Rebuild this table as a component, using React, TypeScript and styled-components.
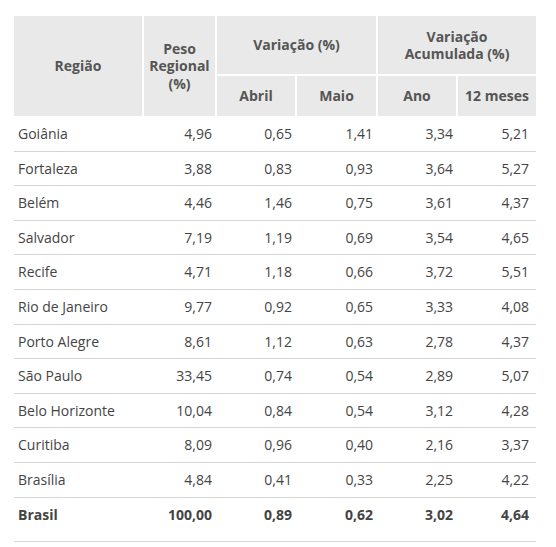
import React from 'react';
import styled, { createGlobalStyle } from 'styled-components';

interface RegionRow {
  name: string;
  peso: string;
  abril: string;
  maio: string;
  ano: string;
  meses: string;
}

const rows: RegionRow[] = [
  { name: 'Goiânia', peso: '4,96', abril: '0,65', maio: '1,41', ano: '3,34', meses: '5,21' },
  { name: 'Fortaleza', peso: '3,88', abril: '0,83', maio: '0,93', ano: '3,64', meses: '5,27' },
  { name: 'Belém', peso: '4,46', abril: '1,46', maio: '0,75', ano: '3,61', meses: '4,37' },
  { name: 'Salvador', peso: '7,19', abril: '1,19', maio: '0,69', ano: '3,54', meses: '4,65' },
  { name: 'Recife', peso: '4,71', abril: '1,18', maio: '0,66', ano: '3,72', meses: '5,51' },
  { name: 'Rio de Janeiro', peso: '9,77', abril: '0,92', maio: '0,65', ano: '3,33', meses: '4,08' },
  { name: 'Porto Alegre', peso: '8,61', abril: '1,12', maio: '0,63', ano: '2,78', meses: '4,37' },
  { name: 'São Paulo', peso: '33,45', abril: '0,74', maio: '0,54', ano: '2,89', meses: '5,07' },
  { name: 'Belo Horizonte', peso: '10,04', abril: '0,84', maio: '0,54', ano: '3,12', meses: '4,28' },
  { name: 'Curitiba', peso: '8,09', abril: '0,96', maio: '0,40', ano: '2,16', meses: '3,37' },
  { name: 'Brasília', peso: '4,84', abril: '0,41', maio: '0,33', ano: '2,25', meses: '4,22' },
];

const total: RegionRow = {
  name: 'Brasil',
  peso: '100,00',
  abril: '0,89',
  maio: '0,62',
  ano: '3,02',
  meses: '4,64',
};

const GlobalStyle = createGlobalStyle`
  body {
    margin: 0;
    background: #fff;
    font-family: "Open Sans", "Liberation Sans", sans-serif;
  }
`;

const Wrapper = styled.div`
  padding: 16px 20px 0 14px;
`;

const Table = styled.table`
  width: 522px;
  table-layout: fixed;
  border-collapse: separate;
  border-spacing: 0;
  font-size: 14px;
`;

const HeadCell = styled.th<{ $last?: boolean; $split?: boolean }>`
  box-sizing: border-box;
  background: #e9e9e9;
  color: #555;
  font-weight: 700;
  font-size: 14px;
  line-height: 17.5px;
  text-align: center;
  vertical-align: middle;
  padding: 0 4px;
  border-right: ${(p) => (p.$last ? 'none' : '2px solid #fff')};
  border-bottom: ${(p) => (p.$split ? '2px solid #fff' : 'none')};
`;

const TopRow = styled.tr`
  height: 60px;
`;

const SubRow = styled.tr`
  height: 40px;
`;

const Cell = styled.td<{ $num?: boolean; $total?: boolean; $first?: boolean }>`
  box-sizing: border-box;
  color: #444;
  font-weight: ${(p) => (p.$total ? 700 : 400)};
  line-height: 19.6px;
  text-align: ${(p) => (p.$num ? 'right' : 'left')};
  padding: ${(p) => (p.$first ? '8px' : '7px')} ${(p) => (p.$num ? '5px' : '4px')}
    ${(p) => (p.$total ? '17px' : '7px')};
  border-bottom: 1px solid #d6d6d6;
  white-space: nowrap;
`;

const BodyRow: React.FC<{ row: RegionRow; isTotal?: boolean; isFirst?: boolean }> = ({
  row,
  isTotal,
  isFirst,
}) => (
  <tr>
    <Cell $total={isTotal} $first={isFirst}>{row.name}</Cell>
    <Cell $num $total={isTotal} $first={isFirst}>{row.peso}</Cell>
    <Cell $num $total={isTotal} $first={isFirst}>{row.abril}</Cell>
    <Cell $num $total={isTotal} $first={isFirst}>{row.maio}</Cell>
    <Cell $num $total={isTotal} $first={isFirst}>{row.ano}</Cell>
    <Cell $num $total={isTotal} $first={isFirst} style={{ paddingRight: 7 }}>
      {row.meses}
    </Cell>
  </tr>
);

const App: React.FC = () => (
  <Wrapper>
    <GlobalStyle />
    <Table>
      <colgroup>
        <col style={{ width: 130 }} />
        <col style={{ width: 73 }} />
        <col style={{ width: 80 }} />
        <col style={{ width: 81 }} />
        <col style={{ width: 80 }} />
        <col style={{ width: 78 }} />
      </colgroup>
      <thead>
        <TopRow>
          <HeadCell rowSpan={2}>Região</HeadCell>
          <HeadCell rowSpan={2}>
            Peso
            <br />
            Regional
            <br />
            (%)
          </HeadCell>
          <HeadCell colSpan={2} $split>
            Variação (%)
          </HeadCell>
          <HeadCell colSpan={2} $split $last>
            Variação
            <br />
            Acumulada (%)
          </HeadCell>
        </TopRow>
        <SubRow>
          <HeadCell>Abril</HeadCell>
          <HeadCell>Maio</HeadCell>
          <HeadCell>Ano</HeadCell>
          <HeadCell $last>12 meses</HeadCell>
        </SubRow>
      </thead>
      <tbody>
        {rows.map((r, i) => (
          <BodyRow key={r.name} row={r} isFirst={i === 0} />
        ))}
        <BodyRow row={total} isTotal />
      </tbody>
    </Table>
  </Wrapper>
);

export default App;
